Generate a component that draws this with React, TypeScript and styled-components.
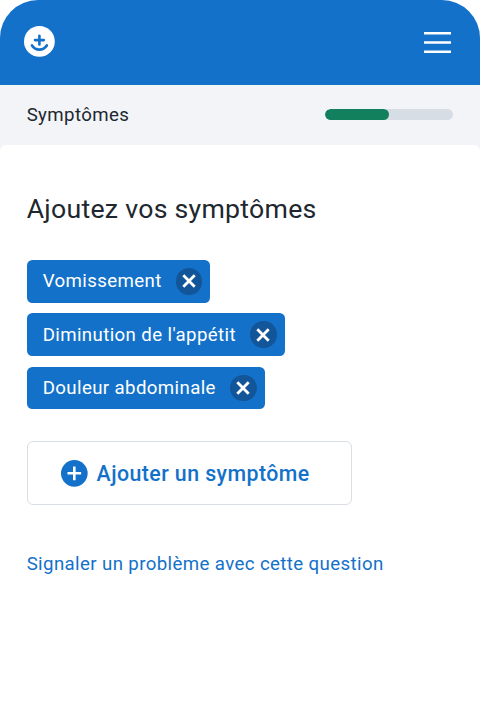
import React from 'react';
import styled, { createGlobalStyle } from 'styled-components';

const colors = {
  blue: '#1471c9',
  deepBlue: '#125699',
  green: '#12805c',
  track: '#d7dde4',
  outline: '#dadfe5',
  mist: '#f3f4f7',
  ink: '#20272e',
};

const GlobalStyle = createGlobalStyle`
  * { box-sizing: border-box; }
  body {
    margin: 0;
    background: #fff;
    color: ${colors.ink};
    font-family: Roboto, "Liberation Sans", sans-serif;
  }
  button { font-family: inherit; cursor: pointer; }
`;

const Screen = styled.div`
  height: 718px;
  display: flex;
  flex-direction: column;
  overflow: hidden;
  border-radius: 38px 38px 0 0;
  background: ${colors.mist};
`;

const TopBar = styled.header`
  flex: none;
  height: 85.33px;
  display: flex;
  align-items: center;
  justify-content: space-between;
  padding: 0 29px 3px 24px;
  background: ${colors.blue};
`;

const Logo = styled.svg`
  width: 31px;
  height: 31px;
  display: block;
  overflow: visible;
`;

const MenuIcon = styled.svg`
  width: 27px;
  height: 22px;
  display: block;
`;

const MenuButton = styled.button`
  display: block;
  margin-top: 3px;
  padding: 0;
  border: 0;
  background: none;
`;

const StepBar = styled.section`
  flex: none;
  height: 60px;
  display: flex;
  align-items: center;
  justify-content: space-between;
  padding: 0 26.67px;
`;

const StepName = styled.span`
  font-size: 18.67px;
  line-height: 26.67px;
  letter-spacing: 0.38px;
`;

const Track = styled.div`
  width: 128.3px;
  height: 11px;
  margin-bottom: 1.67px;
  border-radius: 6px;
  background: ${colors.track};
  overflow: hidden;
`;

const Progress = styled.div<{ $value: number }>`
  width: ${({ $value }) => $value}%;
  height: 100%;
  border-radius: 6px;
  background: ${colors.green};
`;

const Card = styled.main`
  flex: 1;
  display: flex;
  flex-direction: column;
  align-items: flex-start;
  padding: 45.33px 26.67px 0;
  border-radius: 6px 6px 0 0;
  background: #fff;
`;

const Title = styled.h1`
  margin: 0;
  font-size: 26.67px;
  line-height: 37.33px;
  font-weight: 400;
  letter-spacing: 0.27px;
  white-space: nowrap;
`;

const Chips = styled.ul`
  display: flex;
  flex-direction: column;
  align-items: flex-start;
  gap: 10.67px;
  margin: 32px 0 0;
  padding: 0;
  list-style: none;
`;

const Chip = styled.li`
  height: 42.67px;
  display: flex;
  align-items: center;
  gap: 14px;
  padding: 0 8px 0 16px;
  border-radius: 5.33px;
  background: ${colors.blue};
  color: #fff;
  font-size: 18.67px;
  letter-spacing: 0.38px;
  white-space: nowrap;
`;

const RemoveButton = styled.button`
  width: 26.67px;
  height: 26.67px;
  display: grid;
  place-items: center;
  padding: 0;
  border: 0;
  border-radius: 50%;
  background: ${colors.deepBlue};
`;

const AddButton = styled.button`
  width: 325.6px;
  height: 64px;
  display: flex;
  align-items: center;
  justify-content: flex-start;
  gap: 9px;
  margin-top: 32px;
  padding: 0 0 0 33.3px;
  border: 1.33px solid ${colors.outline};
  border-radius: 6px;
  background: #fff;
  color: ${colors.blue};
  font-size: 21.33px;
  font-weight: 500;
  letter-spacing: 0.43px;
  white-space: nowrap;
`;

const ReportLink = styled.a`
  margin-top: 46px;
  color: ${colors.blue};
  font-size: 18.67px;
  line-height: 26.67px;
  letter-spacing: 0.38px;
  text-decoration: none;
  white-space: nowrap;
`;

const CrossIcon = () => (
  <svg width="14" height="14" viewBox="0 0 14 14" fill="none" stroke="#fff" strokeWidth="2.8">
    <path d="M1.3 1.3 12.7 12.7M12.7 1.3 1.3 12.7" />
  </svg>
);

const PlusIcon = () => (
  <svg width="26.67" height="26.67" viewBox="0 0 26.67 26.67" fill="none">
    <circle cx="13.33" cy="13.33" r="13.33" fill={colors.blue} />
    <path d="M13.33 6.5v13.66M6.5 13.33h13.66" stroke="#fff" strokeWidth="2.6" />
  </svg>
);

const symptoms = ['Vomissement', "Diminution de l'appétit", 'Douleur abdominale'];

export default function App() {
  return (
    <>
      <GlobalStyle />
      <Screen>
        <TopBar>
          <Logo viewBox="0 0 31 31" fill="none" stroke={colors.blue} strokeLinecap="round">
            <circle cx="15.4" cy="15.4" r="15.4" fill="#fff" stroke="none" />
            <path d="M15.4 9.8v8.6M11 14.1h8.8" strokeWidth="2.6" />
            <path d="M8 19.5c3.6 5.6 11.2 5.6 14.8 0" strokeWidth="2.7" />
          </Logo>
          <MenuButton aria-label="Menu">
            <MenuIcon viewBox="0 0 27 22" fill="none" stroke="#fff" strokeWidth="2.6">
              <path d="M0 1.3h27M0 10.5h27M0 19.8h27" />
            </MenuIcon>
          </MenuButton>
        </TopBar>
        <StepBar>
          <StepName>Symptômes</StepName>
          <Track>
            <Progress $value={50} />
          </Track>
        </StepBar>
        <Card>
          <Title>Ajoutez vos symptômes</Title>
          <Chips>
            {symptoms.map((name) => (
              <Chip key={name}>
                {name}
                <RemoveButton aria-label={`Retirer ${name}`}>
                  <CrossIcon />
                </RemoveButton>
              </Chip>
            ))}
          </Chips>
          <AddButton>
            <PlusIcon />
            Ajouter un symptôme
          </AddButton>
          <ReportLink href="#">Signaler un problème avec cette question</ReportLink>
        </Card>
      </Screen>
    </>
  );
}
